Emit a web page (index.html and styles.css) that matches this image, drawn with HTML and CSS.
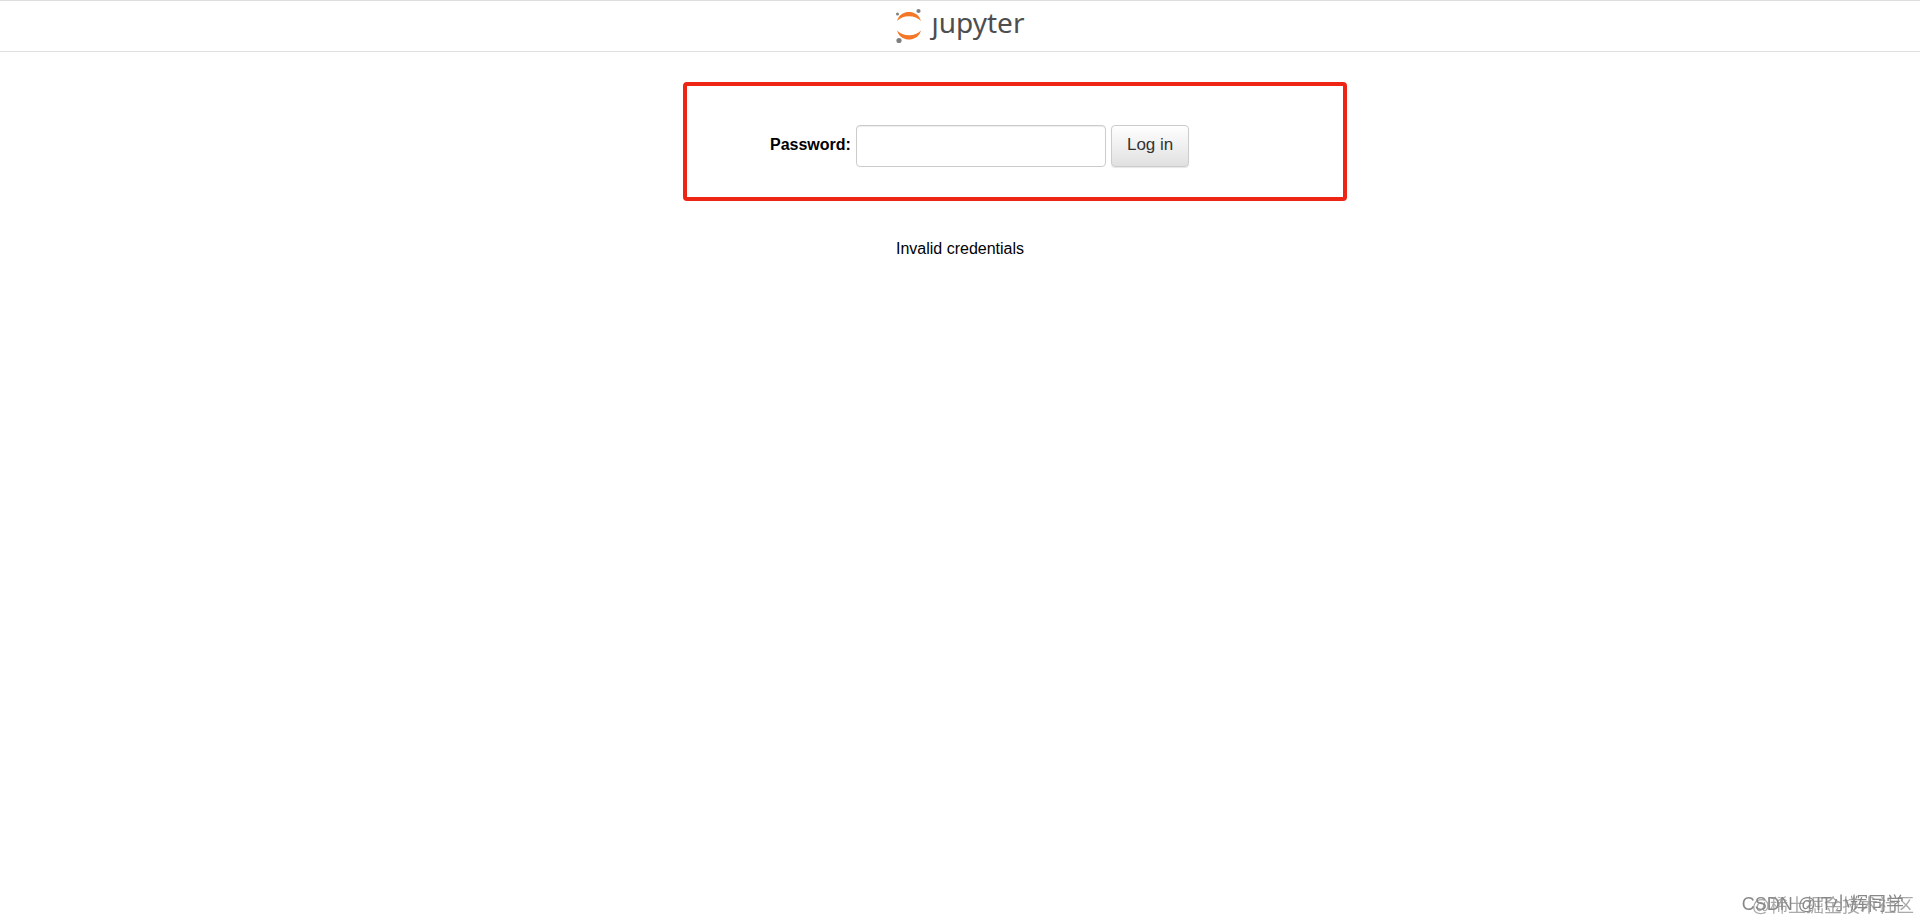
FILE: index.html
```html
<!DOCTYPE html>
<html lang="en">
<head>
  <meta charset="UTF-8">
  <meta name="viewport" content="width=device-width, initial-scale=1.0">
  <title>Jupyter Notebook</title>
  <link rel="stylesheet" href="styles.css">
</head>
<body>
  <header class="header">
    <a class="logo" href="#" aria-label="jupyter">
      <svg class="logo-mark" width="28" height="36" viewBox="0 0 28 36" aria-hidden="true">
        <path class="ring" d="M1 13 C3 6.500 8 4 13 4 C18 4 23 6.500 25 13 C22 9.800 18 8.200 13 8.200 C8 8.200 4 9.800 1 13 Z"/>
        <path class="ring" d="M1 22.500 C4 25.700 8 27.300 13 27.300 C18 27.300 22 25.700 25 22.500 C23 29 18 31.500 13 31.500 C8 31.500 3 29 1 22.500 Z"/>
        <circle class="moon" cx="22.500" cy="3" r="2.100"/>
        <circle class="moon" cx="1.500" cy="6" r="1.500"/>
        <circle class="moon" cx="3" cy="32.500" r="2.600"/>
      </svg>
      <span class="logo-text">ȷupyter</span>
    </a>
  </header>

  <main>
    <!-- login form -->
    <form class="login-form">
      <label for="password">Password:</label>
      <input type="password" id="password" name="password">
      <button type="submit">Log in</button>
    </form>

    <p class="message">Invalid credentials</p>
  </main>

  <!-- watermarks -->
  <div class="watermark community">@稀土掘金技术社区</div>
  <div class="watermark author">CSDN @IT小辉同学</div>
</body>
</html>
```
FILE: styles.css
```css
* {
  box-sizing: border-box;
}

body {
  margin: 0;
  background-color: #fff;
  color: #000;
  font-family: Arial, "Liberation Sans", sans-serif;
  font-size: 16px;
  line-height: 20px;
}

.header {
  display: flex;
  justify-content: center;
  height: 52px;
  padding-top: 7px;
  border-top: 1px solid #ddd;
  border-bottom: 1px solid #e0e0e0;
}

.logo {
  display: flex;
  gap: 8px;
  color: #4e4e4e;
  text-decoration: none;
}

.logo-text {
  font-family: "Noto Sans", "Open Sans", sans-serif;
  font-size: 28px;
  line-height: 28px;
}

.ring {
  fill: #f37726;
}

.moon {
  fill: #808080;
}

.login-form {
  display: flex;
  align-items: center;
  gap: 5px;
  width: 664px;
  max-width: 100%;
  margin-top: 30px;
  margin-left: max(0px, calc(50% - 277px));
  padding: 39px 83px 30px;
  border: 4px solid #ee2415;
  border-radius: 4px;
}

.login-form label {
  padding-bottom: 2px;
  font-weight: bold;
}

.login-form input {
  width: 250px;
  min-width: 0;
  height: 42px;
  padding: 6px 12px;
  border: 1px solid #ccc;
  border-radius: 4px;
  box-shadow: inset 0 1px 1px rgba(0, 0, 0, 0.075);
  font: inherit;
}

.login-form button {
  height: 42px;
  padding: 0 15px 2px;
  border: 1px solid #ccc;
  border-radius: 4px;
  background: linear-gradient(#fff, #e0e0e0);
  box-shadow: 0 1px 1px rgba(0, 0, 0, 0.1);
  color: #333;
  font-family: inherit;
  font-size: 17px;
  white-space: nowrap;
  cursor: pointer;
}

.message {
  margin: 38px 0 0;
  text-align: center;
}

.watermark {
  position: fixed;
  white-space: nowrap;
  line-height: 24px;
}

.author {
  right: 16px;
  bottom: 6px;
  color: #888;
  font-family: "Liberation Sans", "Noto Sans CJK SC", sans-serif;
  font-size: 18px;
}

.community {
  right: 6px;
  bottom: 4px;
  color: #aaa;
  font-family: "Liberation Sans", "Noto Sans CJK SC", sans-serif;
  font-size: 18px;
}
```
